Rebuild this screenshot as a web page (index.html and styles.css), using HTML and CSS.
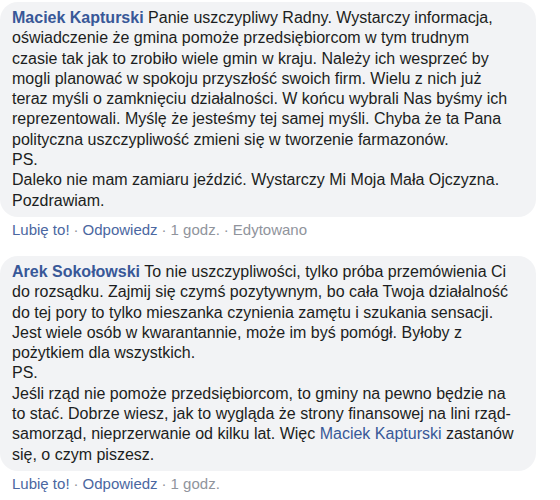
FILE: index.html
```html
<!DOCTYPE html>
<html lang="pl">
<head>
<meta charset="utf-8">
<title>Komentarze</title>
<link rel="stylesheet" href="styles.css">
</head>
<body>
<div class="thread">
  <div class="comment">
    <div class="bubble"><a class="name" href="#">Maciek Kapturski</a> Panie uszczypliwy Radny. Wystarczy informacja, oświadczenie że gmina pomoże przedsiębiorcom w tym trudnym czasie tak jak to zrobiło wiele gmin w kraju. Należy ich wesprzeć by mogli planować w spokoju przyszłość swoich firm. Wielu z nich już teraz myśli o zamknięciu działalności. W końcu wybrali Nas byśmy ich reprezentowali. Myślę że jesteśmy tej samej myśli. Chyba że ta Pana polityczna uszczypliwość zmieni się w tworzenie farmazonów.<br>PS.<br>Daleko nie mam zamiaru jeździć. Wystarczy Mi Moja Mała Ojczyzna.<br>Pozdrawiam.</div>
    <div class="actions"><a href="#">Lubię to!</a><span class="dot">·</span><a href="#">Odpowiedz</a><span class="dot">·</span><span class="meta">1 godz.</span><span class="dot">·</span><span class="meta">Edytowano</span></div>
  </div>
  <div class="comment">
    <div class="bubble"><a class="name" href="#">Arek Sokołowski</a> To nie uszczypliwości, tylko próba przemówienia Ci do rozsądku. Zajmij się czymś pozytywnym, bo cała Twoja działalność do tej pory to tylko mieszanka czynienia zamętu i szukania sensacji. Jest wiele osób w kwarantannie, może im byś pomógł. Byłoby z pożytkiem dla wszystkich.<br>PS.<br>Jeśli rząd nie pomoże przedsiębiorcom, to gminy na pewno będzie na to stać. Dobrze wiesz, jak to wygląda że strony finansowej na lini rząd-samorząd, nieprzerwanie od kilku lat. Więc <a class="mention" href="#">Maciek Kapturski</a> zastanów się, o czym piszesz.</div>
    <div class="actions"><a href="#">Lubię to!</a><span class="dot">·</span><a href="#">Odpowiedz</a><span class="dot">·</span><span class="meta">1 godz.</span></div>
  </div>
</div>
</body>
</html>
```

FILE: styles.css
```css
html, body {
  margin: 0;
  padding: 0;
  background: #ffffff;
}

body {
  font-family: "Liberation Sans", Arial, sans-serif;
  color: #1c1e21;
}

.thread {
  display: flex;
  flex-direction: column;
  gap: 17px;
  padding-top: 2px;
  width: 536px;
}

.comment {
  display: flex;
  flex-direction: column;
}

.bubble {
  background: #f2f3f5;
  border-radius: 18px;
  padding: 6px 19px 6px 12px;
  font-size: 16px;
  line-height: 20.3px;
}

.bubble a {
  text-decoration: none;
  color: #385898;
}

.name {
  font-weight: bold;
}

.actions {
  padding: 4px 0 0 12px;
  font-size: 15px;
  line-height: 18px;
  color: #90949c;
}

.actions a {
  color: #4b67a1;
  text-decoration: none;
}

.dot {
  margin: 0 4px;
  color: #90949c;
}

.meta {
  color: #90949c;
}
```
